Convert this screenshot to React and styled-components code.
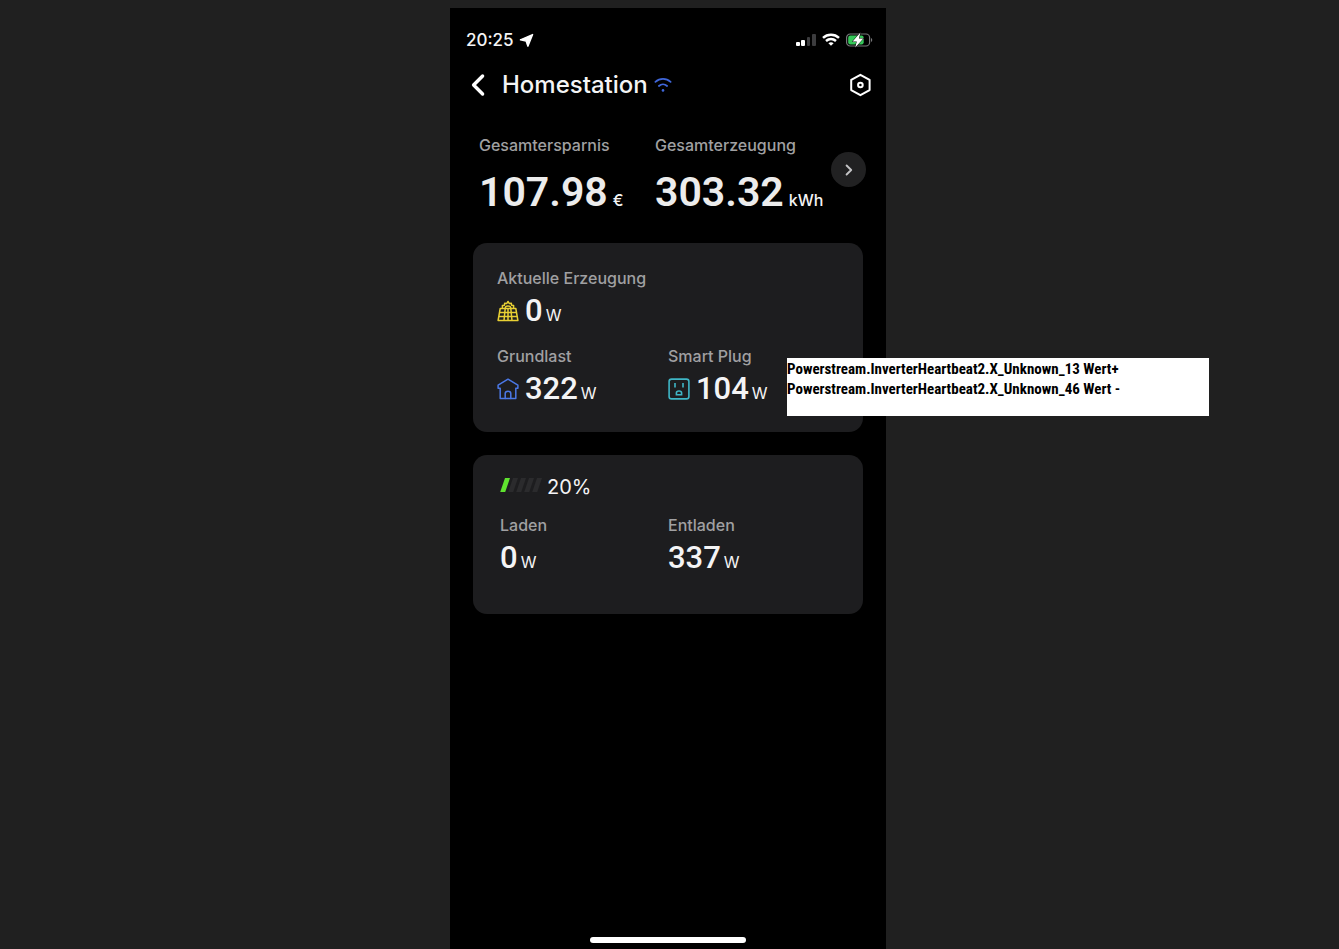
import React from "react";
import styled, { createGlobalStyle } from "styled-components";

const GlobalStyle = createGlobalStyle`
  * { box-sizing: border-box; }
  body {
    margin: 0;
    background: #202020;
    color: #f4f4f5;
    font-family: Inter, "Open Sans", sans-serif;
  }
  h1, p, dl, dt, dd { margin: 0; }
  button { border: 0; padding: 0; background: none; color: inherit; font: inherit; cursor: pointer; }
  svg { display: block; flex: none; }
`;

const Page = styled.div`
  display: flex;
  justify-content: center;
  min-height: 100vh;
  padding: 8px 3px 0 0;
`;

const Phone = styled.main`
  position: relative;
  display: flex;
  flex-direction: column;
  width: 100%;
  max-width: 436px;
  padding-top: 20px;
  background: #000;
`;

const StatusBar = styled.div`
  display: flex;
  align-items: center;
  justify-content: space-between;
  padding: 0 13px 0 16px;
  line-height: 24px;
`;

const Clock = styled.div`
  display: flex;
  align-items: center;
  gap: 5px;
  font-size: 17px;
  font-weight: 500;
`;

const StatusIcons = styled.div`
  display: flex;
  align-items: center;
  gap: 6px;
`;

const Nav = styled.header`
  display: flex;
  align-items: center;
  margin-top: 17px;
  padding: 0 14px 0 20px;
  line-height: 32px;
`;

const Title = styled.h1`
  flex: 1;
  display: flex;
  align-items: center;
  gap: 6px;
  margin-left: 16px;
  font-size: 24px;
  font-weight: 500;
`;

const Totals = styled.section`
  display: grid;
  grid-template-columns: 1fr 1fr 35px;
  margin-top: 32px;
  padding: 0 20px 0 29px;
`;

const RoundButton = styled.button`
  display: grid;
  place-items: center;
  width: 35px;
  height: 35px;
  margin-top: 19px;
  border-radius: 50%;
  background: #212122;
`;

const Stat = styled.dl`
  display: flex;
  flex-direction: column;
  gap: ${(p) => (p.$large ? "11px" : "3px")};
`;

const Label = styled.dt`
  color: #a0a0a2;
  font-size: 16px;
  font-weight: 500;
  line-height: 24px;
  white-space: nowrap;
`;

const Reading = styled.dd`
  display: flex;
  align-items: center;
  gap: 6px;
  height: ${(p) => (p.$large ? "48px" : "36px")};
  white-space: nowrap;
`;

const Figure = styled.span`
  display: flex;
  align-items: baseline;
  gap: ${(p) => (p.$large ? "5px" : "3px")};
  line-height: ${(p) => (p.$large ? "48px" : "36px")};
`;

const Amount = styled.span`
  color: ${(p) => (p.$large ? "#ececec" : "#f4f4f5")};
  font-family: Roboto, sans-serif;
  font-size: ${(p) => (p.$large ? "41px" : "31px")};
  font-weight: ${(p) => (p.$large ? 600 : 500)};
`;

const Unit = styled.span`
  font-size: 16px;
  font-weight: ${(p) => (p.$large ? 500 : 400)};
  line-height: 16px;
`;

const Cards = styled.div`
  display: flex;
  flex-direction: column;
  gap: 23px;
  margin-top: 27px;
  padding: 0 23px;
`;

const Card = styled.section`
  display: grid;
  grid-template-columns: 1fr 1fr;
  row-gap: ${(p) => (p.$battery ? "14px" : "15px")};
  padding: ${(p) => (p.$battery ? "20px 27px 38px" : "23px 24px 25px")};
  border-radius: 14px;
  background: #1d1d1f;
`;

const FullRow = styled.div`
  grid-column: 1 / -1;
`;

const Charge = styled.p`
  grid-column: 1 / -1;
  display: flex;
  align-items: center;
  gap: 4px;
  font-size: 20px;
  line-height: 24px;
`;

const Note = styled.aside`
  position: absolute;
  top: 350px;
  left: 337px;
  width: 422px;
  height: 58px;
  padding-top: 1px;
  background: #fff;
  color: #000;
  font: bold 15px/20px "Roboto Condensed", "Liberation Sans", sans-serif;
  white-space: nowrap;
`;

const HomeIndicator = styled.div`
  width: 156px;
  height: 6px;
  margin: auto auto 6px;
  border-radius: 3px;
  background: #fff;
`;

const LocationIcon = () => (
  <svg width="15" height="15" viewBox="0 0 15 15" aria-hidden="true">
    <path d="M13.6 1.6 8.9 13.2 7.1 8.1 1.4 6.8Z" fill="#fff" stroke="#fff" strokeWidth="1.4" strokeLinejoin="round" />
  </svg>
);

const SignalIcon = () => (
  <svg width="20" height="14" viewBox="0 0 20 14" aria-hidden="true">
    <rect x="0" y="9" width="4" height="4" rx="1" fill="#fff" />
    <rect x="5" y="7" width="4" height="6" rx="1" fill="#fff" />
    <rect x="11" y="4" width="3" height="9" rx="1" fill="#3c3c3e" />
    <rect x="16" y="1" width="4" height="12" rx="1" fill="#3c3c3e" />
  </svg>
);

const WifiStatusIcon = () => (
  <svg width="18" height="14" viewBox="0 0 18 14" fill="none" stroke="#fff" strokeWidth="2.5" aria-hidden="true">
    <path d="M1 4.8C5.6.6 12.4.6 17 4.8M4 8c3-2.6 7-2.6 10 0" />
    <path d="m9 12.8-2.6-2.6c1.5-1.2 3.7-1.2 5.2 0Z" fill="#fff" stroke="none" />
  </svg>
);

const BatteryIcon = () => (
  <svg width="27" height="16" viewBox="0 0 27 16" aria-hidden="true">
    <rect x=".6" y="2" width="23" height="12" rx="3.6" fill="none" stroke="#77777a" strokeWidth="1.2" />
    <path d="M25 6v4c1.7-.6 1.7-3.4 0-4Z" fill="#77777a" />
    <rect x="2.2" y="3.6" width="15.5" height="8.8" rx="2.2" fill="#35c759" />
    <path d="M14.4.6 6.6 9.4h4.2L9.2 15.6l8.2-9.1h-4.5Z" fill="#fff" stroke="#000" strokeWidth="1" paintOrder="stroke" />
  </svg>
);

const BackIcon = () => (
  <svg width="16" height="24" viewBox="0 0 16 24" fill="none" stroke="#fff" strokeWidth="3.4" strokeLinecap="round" strokeLinejoin="round" aria-hidden="true">
    <path d="M12.6 3 3.6 12l9 9" />
  </svg>
);

const WifiIcon = () => (
  <svg width="18" height="16" viewBox="0 0 18 16" fill="none" stroke="#3f66d9" strokeWidth="1.8" strokeLinecap="round" aria-hidden="true">
    <path d="M1.4 4.8c4.4-4 10.8-4 15.2 0M4.9 9c2.4-2.2 5.8-2.2 8.2 0" />
    <circle cx="9" cy="13.4" r="1.3" fill="#3f66d9" stroke="none" />
  </svg>
);

const SettingsIcon = () => (
  <svg width="24" height="24" viewBox="0 0 24 24" fill="none" stroke="#fff" strokeWidth="2" strokeLinejoin="round" aria-hidden="true">
    <path d="m12.4 1.8 9.2 5.1v10.2l-9.2 5.1-9.2-5.1V6.9Z" />
    <circle cx="12.4" cy="12" r="2.3" />
  </svg>
);

const ChevronIcon = () => (
  <svg width="10" height="14" viewBox="0 0 10 14" fill="none" stroke="#c4c4c6" strokeWidth="1.9" strokeLinecap="round" strokeLinejoin="round" aria-hidden="true">
    <path d="m2.6 2.5 4.6 4.5-4.6 4.5" />
  </svg>
);

const SolarIcon = () => (
  <svg width="22" height="22" viewBox="0 0 22 22" fill="none" stroke="#e8d034" strokeWidth="1.5" strokeLinejoin="round" aria-hidden="true">
    <path d="M3.2 8.5h15.6l2.1 12H1.1ZM2.4 12.5h17.2M1.7 16.5h18.6M8.2 8.5 7 20.5M13.8 8.5 15 20.5M11 8.5v12" />
    <path d="M5.4 8.2V5.6l2-.4.3-2 2.1.2L11 1.5l1.2 1.9 2.1-.2.3 2 2 .4v2.6M8.2 8.2c.2-2.8 5.4-2.8 5.6 0" />
  </svg>
);

const HouseIcon = () => (
  <svg width="22" height="22" viewBox="0 0 22 22" fill="none" stroke="#4b78e6" strokeWidth="1.5" strokeLinejoin="round" strokeLinecap="round" aria-hidden="true">
    <path d="M3.2 10.3H1.1V7.2L11 1.2l9.9 6v3.1h-2.1v10.3H3.2Z" />
    <path d="M8.2 20.4v-5c0-3 5.6-3 5.6 0v5" />
  </svg>
);

const PlugIcon = () => (
  <svg width="22" height="22" viewBox="0 0 22 22" fill="none" stroke="#3fb6c6" strokeWidth="1.6" aria-hidden="true">
    <rect x="1.1" y="1.1" width="19.8" height="19.8" rx="2.4" />
    <path d="M7 5v4.4M15 5v4.4M8.4 16.8v-1.9c0-2.6 5.2-2.6 5.2 0v1.9Z" />
  </svg>
);

const ChargeBars = () => (
  <svg width="43" height="18" viewBox="0 0 43 18" aria-hidden="true">
    {[0, 1, 2, 3, 4].map((i) => (
      <path key={i} d="M5 0H10L5.2 14H.2Z" transform={`translate(${i * 8} 0)`} fill={i === 0 ? "#5fe32f" : "#2b2b2d"} />
    ))}
  </svg>
);

const Metric = ({ label, value, unit, icon, large }) => (
  <Stat $large={large}>
    <Label>{label}</Label>
    <Reading $large={large}>
      {icon}
      <Figure $large={large}>
        <Amount $large={large}>{value}</Amount>
        <Unit $large={large}>{unit}</Unit>
      </Figure>
    </Reading>
  </Stat>
);

export default function App() {
  return (
    <Page>
      <GlobalStyle />
      <Phone>
        <StatusBar>
          <Clock>20:25<LocationIcon /></Clock>
          <StatusIcons><SignalIcon /><WifiStatusIcon /><BatteryIcon /></StatusIcons>
        </StatusBar>
        <Nav>
          <button type="button" aria-label="Zurück"><BackIcon /></button>
          <Title>Homestation<WifiIcon /></Title>
          <button type="button" aria-label="Einstellungen"><SettingsIcon /></button>
        </Nav>
        <Totals>
          <Metric large label="Gesamtersparnis" value="107.98" unit="€" />
          <Metric large label="Gesamterzeugung" value="303.32" unit="kWh" />
          <RoundButton type="button" aria-label="Details"><ChevronIcon /></RoundButton>
        </Totals>
        <Cards>
          <Card>
            <FullRow><Metric label="Aktuelle Erzeugung" value="0" unit="W" icon={<SolarIcon />} /></FullRow>
            <Metric label="Grundlast" value="322" unit="W" icon={<HouseIcon />} />
            <Metric label="Smart Plug" value="104" unit="W" icon={<PlugIcon />} />
          </Card>
          <Card $battery>
            <Charge><ChargeBars />20%</Charge>
            <Metric label="Laden" value="0" unit="W" />
            <Metric label="Entladen" value="337" unit="W" />
          </Card>
        </Cards>
        <HomeIndicator />
        <Note>
          <p>Powerstream.InverterHeartbeat2.X_Unknown_13 Wert+</p>
          <p>Powerstream.InverterHeartbeat2.X_Unknown_46 Wert -</p>
        </Note>
      </Phone>
    </Page>
  );
}
